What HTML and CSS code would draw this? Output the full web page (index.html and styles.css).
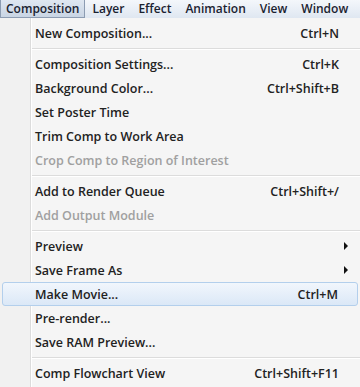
FILE: index.html
```html
<!DOCTYPE html>
<html>
<head>
<meta charset="utf-8">
<link rel="stylesheet" href="styles.css">
</head>
<body>
<div class="menubar">
  <span class="mb-item active">Composition</span>
  <span class="mb-item">Layer</span>
  <span class="mb-item">Effect</span>
  <span class="mb-item">Animation</span>
  <span class="mb-item">View</span>
  <span class="mb-item">Window</span>
</div>
<div class="menu">
  <div class="row"><span class="label">New Composition...</span><span class="key">Ctrl+N</span></div>
  <div class="sep"></div>
  <div class="row"><span class="label">Composition Settings...</span><span class="key">Ctrl+K</span></div>
  <div class="row"><span class="label">Background Color...</span><span class="key">Ctrl+Shift+B</span></div>
  <div class="row"><span class="label">Set Poster Time</span></div>
  <div class="row"><span class="label">Trim Comp to Work Area</span></div>
  <div class="row disabled"><span class="label">Crop Comp to Region of Interest</span></div>
  <div class="sep"></div>
  <div class="row"><span class="label">Add to Render Queue</span><span class="key">Ctrl+Shift+/</span></div>
  <div class="row disabled"><span class="label">Add Output Module</span></div>
  <div class="sep"></div>
  <div class="row"><span class="label">Preview</span><span class="arrow"></span></div>
  <div class="row"><span class="label">Save Frame As</span><span class="arrow"></span></div>
  <div class="row hover"><span class="label">Make Movie...</span><span class="key">Ctrl+M</span></div>
  <div class="row"><span class="label">Pre-render...</span></div>
  <div class="row"><span class="label">Save RAM Preview...</span></div>
  <div class="sep"></div>
  <div class="row"><span class="label">Comp Flowchart View</span><span class="key">Ctrl+Shift+F11</span></div>
</div>
</body>
</html>
```

FILE: styles.css
```css
html, body {
  margin: 0;
  padding: 0;
  background: #f5f5f5;
  overflow: hidden;
}
body {
  width: 360px;
  height: 387px;
  font-family: "Open Sans", "Noto Sans", sans-serif;
  font-size: 12.5px;
  font-weight: 600;
  color: #222;
}
.menubar {
  display: flex;
  height: 18px;
  align-items: stretch;
  font-size: 12px;
  background: linear-gradient(#f4f7fb, #dfe7f1);
}
.mb-item {
  display: flex;
  align-items: center;
  padding: 0 7px;
  line-height: 1;
  color: #1a2230;
}
.mb-item.active {
  padding: 0 5px;
  border: 1px solid #8c9cb2;
  border-top: 0;
  background: linear-gradient(#dfe7f1, #c9d5e4);
}
.menu {
  padding-top: 3px;
  background: linear-gradient(to right, #f1f1f1 0, #f1f1f1 30px, #dcdcdc 30px, #dcdcdc 31px, #ffffff 31px, #ffffff 32px, #f5f5f5 32px);
  height: 366px;
}
.row {
  display: flex;
  align-items: center;
  height: 24px;
  padding: 0 12px 0 35px;
}
.label {
  flex: 1;
  white-space: nowrap;
}
.key {
  white-space: nowrap;
  margin-right: 9px;
}
.arrow {
  width: 0;
  height: 0;
  border-top: 4px solid transparent;
  border-bottom: 4px solid transparent;
  border-left: 4px solid #111;
}
.disabled {
  color: #a0a0a0;
}
.hover {
  margin: 0 2px;
  padding: 0 10px 0 32px;
  height: 22px;
  border: 1px solid #b3cfec;
  border-radius: 3px;
  background: linear-gradient(#f1f6fc, #dbe8f7);
}
.sep {
  height: 7px;
  margin-left: 32px;
  display: flex;
  flex-direction: column;
  justify-content: center;
}
.sep::before {
  content: "";
  display: block;
  border-top: 1px solid #dcdcdc;
  border-bottom: 1px solid #ffffff;
}
```
